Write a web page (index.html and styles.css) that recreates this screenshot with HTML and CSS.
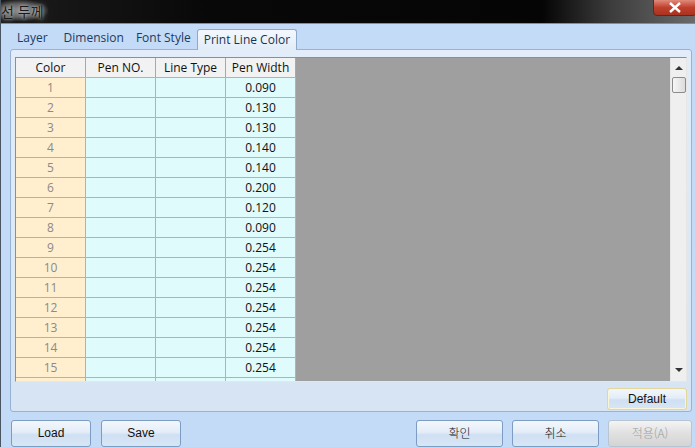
FILE: index.html
```html
<!DOCTYPE html>
<html lang="ko">
<head>
    <meta charset="UTF-8">
    <title>선 두께</title>
    <link rel="stylesheet" href="styles.css">
</head>
<body>
    <div class="window">
        <div class="titlebar">
            <span class="title">선 두께</span>
            <span class="close">
                <svg width="14" height="11" viewBox="0 0 14 11"><path d="M2 1 L12 10 M12 1 L2 10" stroke="#fff" stroke-width="2.4"/></svg>
            </span>
        </div>

        <div class="tabs">
            <span class="tab">Layer</span>
            <span class="tab">Dimension</span>
            <span class="tab">Font Style</span>
            <span class="tab active">Print Line Color</span>
        </div>

        <div class="panel">
            <div class="grid">
                <div class="sheet">
                    <table class="pens">
                        <thead>
                            <tr><th>Color</th><th>Pen NO.</th><th>Line Type</th><th>Pen Width</th></tr>
                        </thead>
                        <tbody id="penRows"></tbody>
                    </table>
                </div>
                <div class="vscroll">
                    <span class="arrow up"></span>
                    <span class="thumb"></span>
                    <span class="arrow down"></span>
                </div>
            </div>
            <div class="panel-foot">
                <button class="btn default">Default</button>
            </div>
        </div>

        <div class="actions">
            <div class="group">
                <button class="btn wide">Load</button>
                <button class="btn wide">Save</button>
            </div>
            <div class="group">
                <button class="btn ko">확인</button>
                <button class="btn ko">취소</button>
                <button class="btn ko off" disabled>적용(A)</button>
            </div>
        </div>
    </div>

    <script>
        let widths = ["0.090", "0.130", "0.130", "0.140", "0.140", "0.200", "0.120", "0.090",
                      "0.254", "0.254", "0.254", "0.254", "0.254", "0.254", "0.254"];
        let body = document.getElementById("penRows");

        widths.forEach((w, i) => {
            let tr = document.createElement("tr");
            tr.innerHTML = '<td class="num">' + (i + 1) + '</td><td></td><td></td><td class="width">' + w + '</td>';
            body.appendChild(tr);
        });
        // the next row only peeks in under the last visible one
        let more = document.createElement("tr");
        more.innerHTML = '<td class="num"></td><td></td><td></td><td></td>';
        body.appendChild(more);
    </script>
</body>
</html>
```

FILE: styles.css
```css
html, body {
    margin: 0;
    padding: 0;
}
body {
    width: 695px;
    height: 447px;
    overflow: hidden;
    font-family: "Open Sans", "Noto Sans CJK KR", sans-serif;
    font-size: 12px;
}
.window {
    height: 447px;
    background: #c3dbf6;
    border-left: 1px solid #4a5563;
    box-sizing: border-box;
    display: flex;
    flex-direction: column;
}

/* title bar */
.titlebar {
    height: 23px;
    flex: none;
    position: relative;
    background: linear-gradient(to right, #1c1c1c 0, #080808 30%, #050505 78%, #3d3d3d 88%, #6a6a6a 100%);
    border-bottom: 1px solid #8c8c8c;
}
.title {
    display: inline-block;
    padding: 2px 4px 0 0;
    font-family: "Noto Sans CJK KR", sans-serif;
    font-size: 14px;
    line-height: 19px;
    color: #1a1a1a;
    background: radial-gradient(ellipse at 40% 50%, #8e8e8e 0, #5e5e5e 45%, rgba(20,20,20,0) 75%);
    text-shadow: 0 0 3px #c4c4c4, 0 0 7px #a0a0a0;
}
.close {
    position: absolute;
    right: -2px;
    top: -1px;
    width: 42px;
    height: 15px;
    background: linear-gradient(#e08a7c, #c0402c 50%, #a8321f);
    border: 1px solid #5a2a22;
    border-radius: 0 0 4px 4px;
    display: flex;
    align-items: center;
    justify-content: center;
}

/* tabs */
.tabs {
    height: 25px;
    flex: none;
    display: flex;
    align-items: flex-end;
    padding-left: 12px;
}
.tab {
    color: #1c3a60;
    padding: 0 4px 3px 4px;
    margin-right: 8px;
    line-height: 16px;
}
.tab:nth-child(2) {
    margin-right: 4px;
}
.tab:nth-child(3) {
    margin-right: 2px;
}
.tab.active {
    padding: 2px 6px 2px 6px;
    background: linear-gradient(#f4f8fd, #e1ecf8);
    border: 1px solid #8eaacb;
    border-bottom: none;
    border-radius: 3px 3px 0 0;
    color: #1a3252;
    margin-bottom: -1px;
    position: relative;
    z-index: 1;
}

/* panel */
.panel {
    height: 363px;
    flex: none;
    margin: 0 3px 0 9px;
    box-sizing: border-box;
    border: 1px solid #97b2d3;
    border-radius: 3px;
    background: linear-gradient(#e2edf9, #d6e4f3);
    padding: 7px 4px 2px 4px;
    display: flex;
    flex-direction: column;
}
.grid {
    height: 325px;
    display: flex;
    border: 1px solid #8e8e8e;
    border-right-color: #e6e6e6;
    border-bottom-color: #e6e6e6;
    box-sizing: border-box;
    background: #a09fa0;
}
.sheet {
    flex: 1;
    overflow: hidden;
}
.pens {
    border-collapse: collapse;
    font-size: 12px;
}
.pens th, .pens td {
    width: 69px;
    height: 19px;
    padding: 0;
    border: 1px solid #b2b2b2;
    text-align: center;
    line-height: 19px;
}
.pens th {
    background: #f2f2f2;
    color: #111;
    font-weight: normal;
    border-top: none;
    border-left-color: #ffffff;
    border-right-color: #a8a8a8;
}
.pens th:first-child {
    border-left: none;
}
.pens td {
    background: #e0fbfb;
}
.pens td.num {
    background: #ffefcf;
    color: #8a8a8a;
    border-left: none;
}
.pens td.width {
    color: #111;
}

/* scrollbar */
.vscroll {
    width: 15px;
    flex: none;
    background: #efefef;
    border-left: 1px solid #e6e6e6;
    position: relative;
}
.arrow {
    position: absolute;
    left: 4px;
    width: 0;
    height: 0;
    border-left: 4px solid transparent;
    border-right: 4px solid transparent;
}
.arrow.up {
    top: 8px;
    border-bottom: 4px solid #333;
}
.arrow.down {
    bottom: 9px;
    border-top: 4px solid #333;
}
.thumb {
    position: absolute;
    left: 1px;
    top: 19px;
    width: 12px;
    height: 14px;
    border: 1px solid #8c8c8c;
    border-radius: 2px;
    background: linear-gradient(to right, #f6f6f6, #dcdcdc);
}

.panel-foot {
    display: flex;
    justify-content: flex-end;
    padding-top: 6px;
}

/* buttons */
.btn {
    font-family: "Liberation Sans", "Noto Sans CJK KR", sans-serif;
    font-size: 12px;
    color: #111;
    height: 27px;
    border: 1px solid #7d9cc2;
    border-radius: 3px;
    background: linear-gradient(#f3f7fc 0, #e3edf8 45%, #cfe0f3 55%, #d8e6f5 100%);
    padding: 0 0 2px 0;
    cursor: pointer;
}
.btn.default {
    width: 80px;
    height: 22px;
    padding: 0;
    border-color: #e2d69a;
    box-shadow: inset 0 0 0 1px #fbf5d8;
}
.actions {
    display: flex;
    justify-content: space-between;
    padding: 8px 3px 0 10px;
}
.group {
    display: flex;
    gap: 10px;
}
.group + .group {
    gap: 9px;
}
.btn.wide {
    width: 80px;
}
.btn.ko {
    width: 87px;
    font-family: "Noto Sans CJK KR", sans-serif;
    font-weight: 300;
}
.btn.off {
    width: 84px;
    color: #a0a0a0;
    border-color: #b8c4d2;
    background: linear-gradient(#f4f4f4, #e0e0e0 50%, #d4d4d4);
    cursor: default;
}
```
